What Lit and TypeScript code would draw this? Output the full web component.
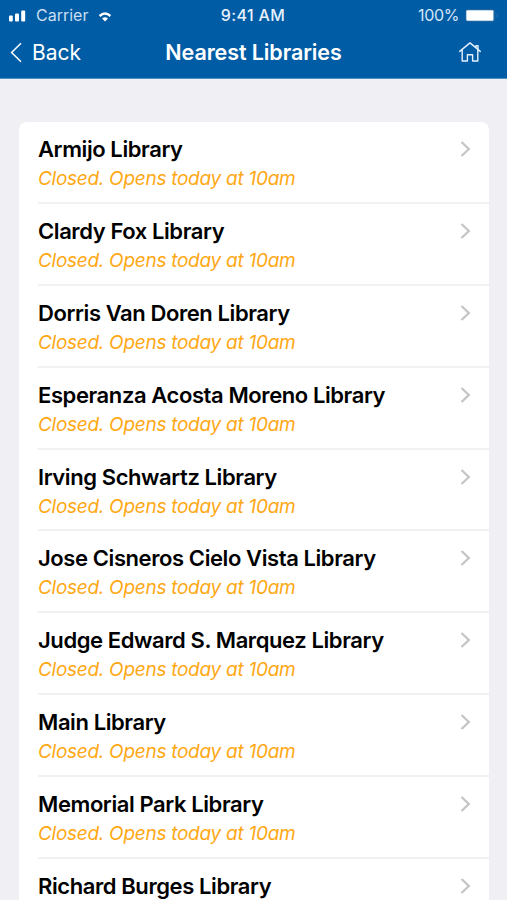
import { LitElement, html, css } from "lit";
import { customElement } from "lit/decorators.js";

const libraries = [
  "Armijo Library",
  "Clardy Fox Library",
  "Dorris Van Doren Library",
  "Esperanza Acosta Moreno Library",
  "Irving Schwartz Library",
  "Jose Cisneros Cielo Vista Library",
  "Judge Edward S. Marquez Library",
  "Main Library",
  "Memorial Park Library",
  "Richard Burges Library",
];

@customElement("app-root")
export class AppRoot extends LitElement {
  static styles = css`
    :host {
      display: block;
      height: 900px;
      overflow: hidden;
      background: #efeff4;
      font-family: Inter, "Liberation Sans", sans-serif;
      color: #000;
    }
    svg { display: block; fill: none; overflow: visible; }
    header {
      height: 79px;
      box-sizing: border-box;
      border-bottom: 1px solid #4f8fc3;
      background: #005ca5;
      color: #fff;
    }
    .status, .nav {
      display: grid;
      grid-template-columns: 1fr auto 1fr;
      align-items: center;
      box-sizing: border-box;
    }
    .status { height: 30px; padding: 0 10px 0 9px; font-size: 16px; }
    .nav { height: 45px; padding: 0 10px; }
    .left, .right { display: flex; align-items: center; }
    .right { justify-content: flex-end; }
    .carrier { margin: 0 11px 0 10px; color: #c9dff2; }
    .wifi { margin-top: 3px; }
    .time { font-weight: 500; letter-spacing: 0.35px; color: #e6f1fb; }
    .percent { margin-right: 7px; letter-spacing: -0.35px; color: #d5e7f7; }
    .back { font-size: 21px; margin-left: 10px; }
    .title { font-size: 21.5px; font-weight: 600; letter-spacing: -0.1px; margin-top: -1px; }
    .home { margin: -2px 16px 0 0; }
    .list { margin: 43px 18px 0 19px; background: #fff; border-radius: 8px 8px 0 0; }
    .row {
      height: 81.9px;
      margin-left: 19px;
      padding-right: 18px;
      box-sizing: border-box;
      display: flex;
      justify-content: space-between;
      border-bottom: 2px solid #f1f1f3;
    }
    .name {
      font-size: 22px;
      line-height: 28px;
      font-weight: 600;
      letter-spacing: -0.41px;
      margin-top: 13px;
      white-space: nowrap;
    }
    .hours {
      font-size: 19px;
      line-height: 26px;
      font-style: italic;
      letter-spacing: -0.27px;
      color: #ffa814;
      margin-top: 3px;
    }
    .chev { margin-top: 19px; }
  `;

  render() {
    return html`
      <header>
        <div class="status">
          <div class="left">
            <svg width="17" height="11" viewBox="0 0 17 11">
              <g fill="#fff">
                <rect x="0" y="5.6" width="3.8" height="5.8" rx="1"/>
                <rect x="6" y="3.4" width="4" height="8" rx="1"/>
                <rect x="12.2" y=".4" width="4" height="11" rx="1"/>
              </g>
            </svg>
            <span class="carrier">Carrier</span>
            <svg class="wifi" width="12" height="10" viewBox="0 0 12 10">
              <path d="M.6 4Q6-.9 11.4 4" stroke="#fff" stroke-width="2.4"/>
              <path d="M3.1 6.6Q6 4.1 8.9 6.6L6 9.5Z" fill="#fff"/>
            </svg>
          </div>
          <span class="time">9:41 AM</span>
          <div class="right">
            <span class="percent">100%</span>
            <svg width="31" height="13" viewBox="0 0 31 13">
              <rect x="0" y=".5" width="29" height="12" rx="2" stroke="#1f649f"/>
              <rect x=".3" y="1.2" width="27.2" height="10.6" rx="1" fill="#fff"/>
              <path d="M31 5v3" stroke="#2b6ea9"/>
            </svg>
          </div>
        </div>
        <div class="nav">
          <div class="left">
            <svg width="12" height="20" viewBox="0 0 12 20"><path d="M11 .2L1.6 9.5 11 18.8" stroke="#fff" stroke-width="1.5"/></svg>
            <span class="back">Back</span>
          </div>
          <span class="title">Nearest Libraries</span>
          <div class="right">
            <svg class="home" width="22" height="20" viewBox="0 0 22 20">
              <path d="M.7 9.4L11 .9l10.3 8.5M17 5.6V3.6h2V7.4M3.2 7.7V19H8.4V12.7H13.6V19H18.8V7.7" stroke="#e4f2ff" stroke-width="1.4" stroke-linejoin="round" stroke-linecap="round"/>
            </svg>
          </div>
        </div>
      </header>
      <main class="list">
        ${libraries.map((name) => html`
          <div class="row">
            <div>
              <div class="name">${name}</div>
              <div class="hours">Closed. Opens today at 10am</div>
            </div>
            <svg class="chev" width="11" height="16" viewBox="0 0 11 16">
              <path d="M1.5 1l7.3 7-7.3 7" stroke="#c5c5c7" stroke-width="2.3"/>
            </svg>
          </div>`)}
      </main>`;
  }
}
